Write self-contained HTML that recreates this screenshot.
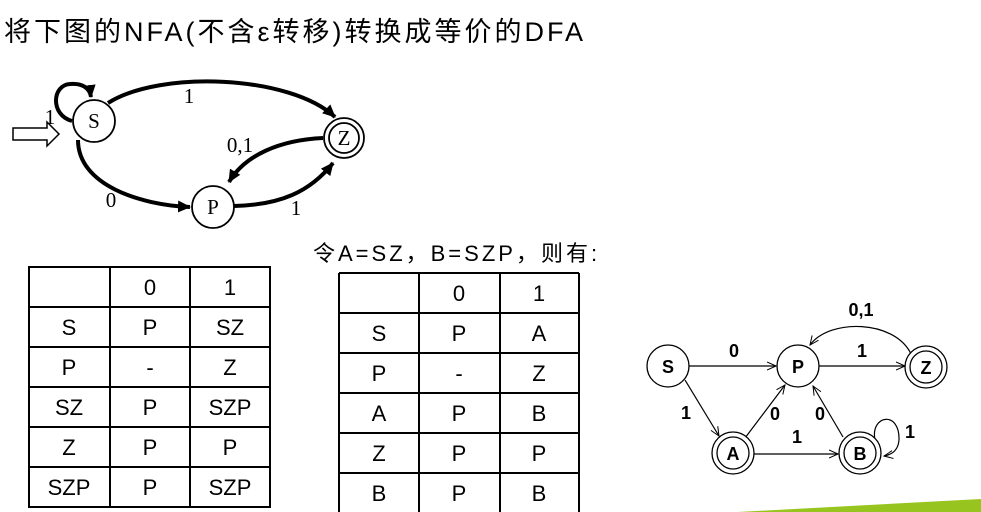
<!DOCTYPE html>
<html><head><meta charset="utf-8"><style>
body{margin:0;width:981px;height:512px;overflow:hidden;background:#fff;position:relative;font-family:"Liberation Sans","Noto Sans CJK SC",sans-serif}
.t{position:absolute;white-space:nowrap;color:#000}
</style></head><body>
<div class="t" style="left:4px;top:15px;font-size:27px;line-height:34px;letter-spacing:3px">将下图的NFA(不含ε转移)转换成等价的DFA</div>
<div class="t" style="left:313px;top:240px;font-size:22px;line-height:28px;letter-spacing:3px">令A=SZ，B=SZP，则有:</div>
<svg width="981" height="512" style="position:absolute;left:0;top:0" xmlns="http://www.w3.org/2000/svg">
<defs>
<marker id="ah2" markerWidth="14" markerHeight="12" refX="12" refY="6" orient="auto" markerUnits="userSpaceOnUse"><path d="M0,0 L13,6 L0,12 Z" fill="#000"/></marker>
<marker id="oa" markerWidth="10" markerHeight="10" refX="9" refY="5" orient="auto" markerUnits="userSpaceOnUse"><path d="M0,1 L9,5 L0,9" fill="none" stroke="#000" stroke-width="1"/></marker>
</defs>
<g font-family="Liberation Serif,serif" font-size="21" text-anchor="middle">
<path d="M13,128 H47 V122 L59,134 L47,146 V140 H13 Z" fill="#fff" stroke="#000" stroke-width="1.5"/>
<path d="M72,121 C50,115 52,85 70,84 C82,83 90,88 91,97" fill="none" stroke="#000" stroke-width="4" marker-end="url(#ah2)"/>
<text x="50" y="124">1</text>
<path d="M108,103 C160,70 290,75 335,117" fill="none" stroke="#000" stroke-width="4" marker-end="url(#ah2)"/>
<text x="189" y="103">1</text>
<path d="M78,140 C78,185 140,205 190,207" fill="none" stroke="#000" stroke-width="4" marker-end="url(#ah2)"/>
<text x="111" y="207">0</text>
<path d="M323,138 C280,140 245,155 229,182" fill="none" stroke="#000" stroke-width="4" marker-end="url(#ah2)"/>
<text x="240" y="152">0,1</text>
<path d="M234,206 C280,205 310,192 333,163" fill="none" stroke="#000" stroke-width="4" marker-end="url(#ah2)"/>
<text x="296" y="215">1</text>
<circle cx="94" cy="121" r="21" fill="#fff" stroke="#000" stroke-width="1.8"/>
<text x="94" y="128">S</text>
<circle cx="344" cy="138" r="20" fill="#fff" stroke="#000" stroke-width="1.8"/>
<circle cx="344" cy="138" r="15" fill="none" stroke="#000" stroke-width="1.8"/>
<text x="344" y="145">Z</text>
<circle cx="213" cy="207" r="21" fill="#fff" stroke="#000" stroke-width="1.8"/>
<text x="213" y="214">P</text>
</g>
<g stroke="#000" stroke-width="2" fill="none">
<rect x="29" y="267" width="241" height="240"/>
<path d="M110,267V507M190,267V507M29,307H270M29,347H270M29,387H270M29,427H270M29,467H270"/>
<path d="M339,273V512M419,273V512M500,273V512M579,273V512M339,273H579M339,313H579M339,353H579M339,393H579M339,433H579M339,473H579"/>
</g>
<g font-family="Liberation Sans,sans-serif" font-size="22" text-anchor="middle">
<text x="150" y="295">0</text><text x="230" y="295">1</text>
<text x="69" y="335">S</text><text x="150" y="335">P</text><text x="230" y="335">SZ</text>
<text x="69" y="375">P</text><text x="150" y="375">-</text><text x="230" y="375">Z</text>
<text x="69" y="415">SZ</text><text x="150" y="415">P</text><text x="230" y="415">SZP</text>
<text x="69" y="455">Z</text><text x="150" y="455">P</text><text x="230" y="455">P</text>
<text x="69" y="495">SZP</text><text x="150" y="495">P</text><text x="230" y="495">SZP</text>
<text x="459" y="301">0</text><text x="539" y="301">1</text>
<text x="379" y="341">S</text><text x="459" y="341">P</text><text x="539" y="341">A</text>
<text x="379" y="381">P</text><text x="459" y="381">-</text><text x="539" y="381">Z</text>
<text x="379" y="421">A</text><text x="459" y="421">P</text><text x="539" y="421">B</text>
<text x="379" y="461">Z</text><text x="459" y="461">P</text><text x="539" y="461">P</text>
<text x="379" y="501">B</text><text x="459" y="501">P</text><text x="539" y="501">B</text>
</g>
<g stroke="#000" stroke-width="1.2" fill="none">
<path d="M689,366 H776" marker-end="url(#oa)"/>
<path d="M819,366 H905" marker-end="url(#oa)"/>
<path d="M911,354 C895,320 830,318 810,345" marker-end="url(#oa)"/>
<path d="M685,380 L719,436" marker-end="url(#oa)"/>
<path d="M745,438 L785,385" marker-end="url(#oa)"/>
<path d="M843,437 L813,386" marker-end="url(#oa)"/>
<path d="M754,454 H838" marker-end="url(#oa)"/>
<path d="M875,440 C870,415 900,410 899,440 C898,452 890,455 884,456" marker-end="url(#oa)"/>
</g>
<g font-family="Liberation Sans,sans-serif" font-size="18" font-weight="bold" text-anchor="middle">
<circle cx="668" cy="366" r="21" fill="#fff" stroke="#000" stroke-width="1.3"/><text x="668" y="373">S</text>
<circle cx="798" cy="366" r="21" fill="#fff" stroke="#000" stroke-width="1.3"/><text x="798" y="373">P</text>
<circle cx="926" cy="367" r="21" fill="#fff" stroke="#000" stroke-width="1.3"/><circle cx="926" cy="367" r="16" fill="none" stroke="#000" stroke-width="1.3"/><text x="926" y="374">Z</text>
<circle cx="733" cy="453" r="21" fill="#fff" stroke="#000" stroke-width="1.3"/><circle cx="733" cy="453" r="16" fill="none" stroke="#000" stroke-width="1.3"/><text x="733" y="460">A</text>
<circle cx="860" cy="453" r="21" fill="#fff" stroke="#000" stroke-width="1.3"/><circle cx="860" cy="453" r="16" fill="none" stroke="#000" stroke-width="1.3"/><text x="860" y="460">B</text>
<text x="734" y="357">0</text><text x="862" y="357">1</text><text x="861" y="316">0,1</text>
<text x="686" y="419">1</text><text x="775" y="420">0</text><text x="820" y="420">0</text>
<text x="797" y="443">1</text><text x="910" y="438">1</text>
</g>
<path d="M738,512 L981,499 L981,512 Z" fill="#97c41f"/>
</svg>
</body></html>
